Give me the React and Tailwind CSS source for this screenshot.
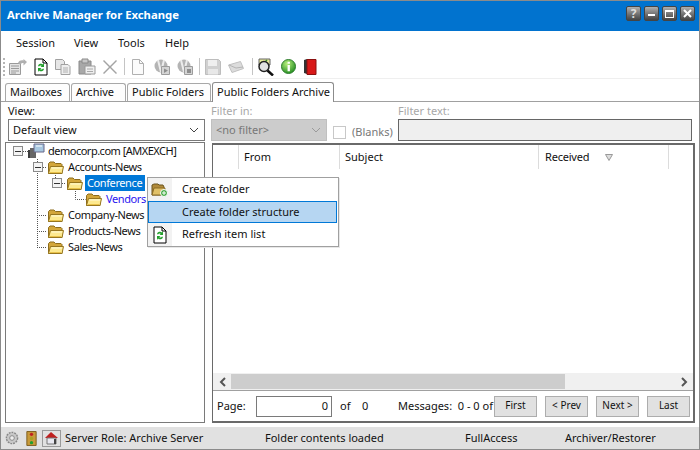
import React from "react";

const Folder = () => (
  <svg width="18" height="15" viewBox="0 0 18 15" className="shrink-0">
    <path d="M1.500 13.500V3.500L3 2h4l1.500 1.500H14l1 1V13.500z" fill="#d3a63a" stroke="#8d6c1c" />
    <path d="M1.500 13.500L3.500 6.500h13l-1.500 7z" fill="#fde98f" stroke="#97761f" />
    <path d="M4.500 8h10.500" stroke="#fffadb" />
    <path d="M3 12.500h11" stroke="#e9c24a" />
  </svg>
);

const Expander = () => (
  <span className="w-[10px] h-[10px] border border-[#8a8a8a] bg-[#f4f4f4] flex items-center justify-center shrink-0">
    <span className="w-[6px] h-px bg-[#333]" />
  </span>
);

const RefreshDoc = () => (
  <svg width="14" height="18" viewBox="0 0 14 18">
    <path d="M1 1h8l4 4v12H1z" fill="#fff" stroke="#000" />
    <path d="M9 1v4h4" fill="none" stroke="#000" />
    <path d="M4 8a3 3 0 0 1 5-1.500L10 5v4H6.500l1.300-1.200A2 2 0 0 0 5 8.500z" fill="#22a02c" />
    <path d="M10 11a3 3 0 0 1-5 1.500L4 14v-4h3.500l-1.300 1.200A2 2 0 0 0 9 10.500z" fill="#22a02c" />
  </svg>
);

const Toolbar = () => (
  <div className="h-[24px] shrink-0 flex items-center pl-[2px] border-b border-[#efefef]">
    <span className="w-[2px] h-[18px] border-l-2 border-dotted border-[#b5b5b5]" />
    <svg width="18" height="16" viewBox="0 0 18 16" className="ml-[4px]">
      <path d="M0.500 4.500h11v11h-11z" fill="#e4e4e4" stroke="#9a9a9a" />
      <path d="M2 7h8M2 9.500h8M2 12h8M2 14h5" stroke="#9a9a9a" />
      <path d="M9 4c1-2.500 3.500-3 5.500-2.500V0L18 3l-3.500 3.500V4c-1.500 0-3 .5-3.500 1.500z" fill="#b0b0b0" />
    </svg>
    <span className="ml-[7px] flex"><RefreshDoc /></span>
    <svg width="16" height="16" viewBox="0 0 16 16" className="ml-[7px]">
      <path d="M.5.5h7l2 2v8h-9z" fill="#e6e6e6" stroke="#a0a0a0" />
      <path d="M6 5.500h7l2 2v8H6z" fill="#eeeeee" stroke="#a0a0a0" />
      <path d="M8 9h5M8 11h5M8 13h5" stroke="#b0b0b0" />
    </svg>
    <svg width="18" height="17" viewBox="0 0 18 17" className="ml-[7px]">
      <path d="M1 3h12v13H1z" fill="#a8a8a8" stroke="#8a8a8a" />
      <path d="M4 1h6v4H4z" fill="#c8c8c8" stroke="#8a8a8a" />
      <path d="M7 8h10v8H7z" fill="#efefef" stroke="#9a9a9a" />
      <path d="M9 11h6M9 13.500h6" stroke="#aaa" />
    </svg>
    <svg width="14" height="14" viewBox="0 0 14 14" className="ml-[7px]">
      <path d="M1 0l6 6 6-6 1 1-6 6 6 6-1 1-6-6-6 6-1-1 6-6-6-6z" fill="#a4a4a4" />
    </svg>
    <span className="ml-[7px] w-px h-[17px] bg-[#c4c4c4]" />
    <svg width="12" height="16" viewBox="0 0 12 16" className="ml-[7px]">
      <path d="M.5.5h7l4 4v11h-11z" fill="#fbfbfb" stroke="#b0b0b0" />
      <path d="M7.500.5v4h4" fill="none" stroke="#b0b0b0" />
    </svg>
    <svg width="16" height="16" viewBox="0 0 16 16" className="ml-[10px]">
      <circle cx="7" cy="7" r="6.500" fill="#b4b4b4" />
      <path d="M4 1l3 12M10 1L7 13" stroke="#ececec" strokeWidth="2" />
      <path d="M7.500 7.500h8v8h-8z" fill="#d4d4d4" stroke="#9c9c9c" />
      <path d="M10 9.500l4 2-4 2.500z" fill="#8e8e8e" />
    </svg>
    <svg width="16" height="16" viewBox="0 0 16 16" className="ml-[7px]">
      <circle cx="7" cy="7" r="6.500" fill="#b4b4b4" />
      <path d="M4 1l3 12M10 1L7 13" stroke="#ececec" strokeWidth="2" />
      <path d="M7.500 7.500h8v8h-8z" fill="#d4d4d4" stroke="#9c9c9c" />
      <path d="M10 10h4v4h-4z" fill="#8e8e8e" />
    </svg>
    <span className="ml-[6px] w-px h-[17px] bg-[#c4c4c4]" />
    <svg width="16" height="16" viewBox="0 0 16 16" className="ml-[5px]">
      <path d="M.5.5h13l2 2v13H.500z" fill="#d0d0d0" stroke="#bdbdbd" />
      <path d="M3 1h9v6H3z" fill="#efefef" />
      <path d="M3 10h10v5.500H3z" fill="#e8e8e8" />
    </svg>
    <svg width="16" height="12" viewBox="0 0 16 12" className="ml-[7px]">
      <path d="M.5 4l12-3.500 3 7-11.500 4z" fill="#dcdcdc" stroke="#c0c0c0" />
      <path d="M1 4l7 3 7-1" fill="none" stroke="#b4b4b4" />
    </svg>
    <span className="ml-[8px] w-px h-[17px] bg-[#c4c4c4]" />
    <svg width="17" height="18" viewBox="0 0 17 18" className="ml-[4px]">
      <path d="M2 1h11v6H2z" fill="#e6e89a" stroke="#666" />
      <path d="M4 4l2 2 4-4" stroke="#3a8a2a" strokeWidth="1.500" fill="none" />
      <circle cx="7" cy="8.500" r="5" fill="#e2e2e2" stroke="#222" strokeWidth="1.500" />
      <path d="M10.500 12.500l5.500 5" stroke="#111" strokeWidth="2.500" />
    </svg>
    <svg width="15" height="15" viewBox="0 0 16 16" className="ml-[7px]">
      <defs>
        <radialGradient id="gi" cx="40%" cy="30%" r="75%">
          <stop offset="0" stopColor="#b8ef7c" />
          <stop offset="1" stopColor="#1e8a1e" />
        </radialGradient>
      </defs>
      <circle cx="8" cy="8" r="7.500" fill="url(#gi)" stroke="#2a7a2a" />
      <path d="M7 3h2.500v2H7zM7 6.500h2.500V13H7z" fill="#fff" />
    </svg>
    <svg width="13" height="16" viewBox="0 0 13 16" className="ml-[8px]">
      <path d="M0 1l3-1v15l-3-1z" fill="#333" />
      <path d="M3 .5h9v15H3z" fill="#d81818" stroke="#8a1010" />
    </svg>
  </div>
);

const Tab = ({ children, w, active }) => (
  <div
    className={`border border-b-0 rounded-t-[3px] flex items-center pl-[4px] pb-[2px] whitespace-nowrap ${
      active ? "h-[20px] bg-white -mb-px relative z-10 border-[#8c8c8c]" : "h-[18px] bg-[#fdfdfd] border-[#a8a8a8]"
    }`}
    style={{ width: w }}
  >
    {children}
  </div>
);

const TreeRow = ({ indent, expander, gap = 4, iconGap = 3, icon, children }) => (
  <div className="h-[16px] flex items-center relative" style={{ paddingLeft: indent }}>
    {expander ? <Expander /> : <span className="w-[10px]" />}
    <span className="flex" style={{ marginLeft: gap, marginRight: iconGap }}>{icon}</span>
    {children}
  </div>
);

const TreeText = ({ children }) => (
  <span className="pb-[2px] tracking-[-0.4px] whitespace-nowrap">{children}</span>
);

const PagerButton = ({ children }) => (
  <button className="w-[43px] h-[21px] bg-[#e1e1e1] border border-[#adadad] text-[10px] text-[#111] pb-[2px]">
    {children}
  </button>
);

const StatusText = ({ w, children }) => (
  <span className="shrink-0 whitespace-nowrap pb-[2px]" style={{ width: w }}>{children}</span>
);

export default function App() {
  return (
    <div
      className="w-[700px] h-[450px] relative overflow-hidden bg-white border border-[#8b8b8b] flex flex-col text-[11px] text-[#111] leading-none"
      style={{ fontFamily: '"Noto Sans", sans-serif' }}
    >
      {/* title bar */}
      <div className="h-[30px] shrink-0 bg-[#0173cf] flex items-center pl-[6px] pr-[4px] text-white font-bold text-[11.3px]">
        <span className="flex-1 pb-[2px]">Archive Manager for Exchange</span>
        <div className="flex gap-[3px] -mt-[5px]">
          <span className="w-[15px] h-[15px] rounded-[2px] border border-[#444] bg-gradient-to-b from-[#b0b0b0] to-[#444] text-[#ddd] text-[12px] font-bold flex items-center justify-center">?</span>
          <span className="w-[15px] h-[15px] rounded-[2px] border border-[#444] bg-gradient-to-b from-[#b0b0b0] to-[#444] flex items-center justify-center">
            <span className="w-[7px] h-[2px] bg-white mt-[2px]" />
          </span>
          <span className="w-[15px] h-[15px] rounded-[2px] border border-[#444] bg-gradient-to-b from-[#b0b0b0] to-[#444] flex items-center justify-center">
            <span className="w-[9px] h-[8px] border border-white border-t-2" />
          </span>
          <span className="w-[15px] h-[15px] rounded-[2px] border border-[#444] bg-gradient-to-b from-[#b0b0b0] to-[#444] flex items-center justify-center">
            <svg width="9" height="9" viewBox="0 0 9 9"><path d="M1 1l7 7M8 1L1 8" stroke="#fff" strokeWidth="2" /></svg>
          </span>
        </div>
      </div>

      {/* menu */}
      <div className="h-[24px] shrink-0 flex items-center pl-[15px] pb-[2px]">
        <span className="w-[58px]">Session</span>
        <span className="w-[44px]">View</span>
        <span className="w-[47px]">Tools</span>
        <span>Help</span>
      </div>

      <Toolbar />

      {/* tabs */}
      <div className="h-[22px] shrink-0 flex items-end pl-[4px] gap-[1px]">
        <Tab w={65}>Mailboxes</Tab>
        <Tab w={55}>Archive</Tab>
        <Tab w={84}>Public Folders</Tab>
        <Tab w={122} active>Public Folders Archive</Tab>
      </div>

      {/* body */}
      <div className="flex-1 flex px-[4px] min-h-0 border-t border-[#a0a0a0]">
        {/* left */}
        <div className="w-[200px] shrink-0 flex flex-col">
          <div className="pl-[3px] h-[17px] flex items-center pb-[1px]">View:</div>
          <div className="ml-[3px] h-[22px] border border-[#7a7a7a] flex items-center pl-[4px] pr-[5px]">
            <span className="flex-1 pb-[2px]">Default view</span>
            <svg width="10" height="6" viewBox="0 0 10 6"><path d="M1 1l4 4 4-4" fill="none" stroke="#444" /></svg>
          </div>
          <div className="relative mt-[1px] flex-1 border border-[#7a7a7a]">
            <svg className="absolute left-0 top-0" width="110" height="120" viewBox="0 0 110 120">
              <g stroke="#555" strokeDasharray="1 1" fill="none">
                <path d="M17 8.500h5M31.500 16V105M31 72.500h10M31 88.500h10M31 104.500h10M37 24.500h4" />
                <path d="M49.500 30v6M56 40.500h4" />
                <path d="M69.500 46v10.500h10" />
              </g>
            </svg>
            <TreeRow indent={7} expander icon={
              <svg width="18" height="16" viewBox="0 0 18 16">
                <path d="M1 7h7v8H1z" fill="#3e3e3e" />
                <path d="M3 5h6v10H3z" fill="#666" />
                <path d="M7 1h10v8H7z" fill="#a8c8e0" stroke="#668" />
                <path d="M9 3h6" stroke="#fff" />
              </svg>
            }>
              <span className="whitespace-nowrap pb-[2px] tracking-[-0.5px]">democorp.com [AMXEXCH]</span>
            </TreeRow>
            <TreeRow indent={27} expander icon={<Folder />}>
              <TreeText>Accounts-News</TreeText>
            </TreeRow>
            <TreeRow indent={46} expander icon={<Folder />}>
              <span className="bg-[#0078d7] text-white h-[16px] w-[60px] flex items-center pl-[2px] pb-[2px] -ml-[2px] tracking-[-0.4px]">Conference</span>
            </TreeRow>
            <TreeRow indent={65} icon={<Folder />}>
              <span className="text-[#2a14f0] pb-[2px] tracking-[-0.4px]">Vendors</span>
            </TreeRow>
            <TreeRow indent={27} icon={<Folder />}>
              <TreeText>Company-News</TreeText>
            </TreeRow>
            <TreeRow indent={27} icon={<Folder />}>
              <TreeText>Products-News</TreeText>
            </TreeRow>
            <TreeRow indent={27} icon={<Folder />}>
              <TreeText>Sales-News</TreeText>
            </TreeRow>
          </div>
        </div>

        {/* right */}
        <div className="ml-[6px] flex-1 flex flex-col min-w-0">
          <div className="h-[41px] shrink-0 flex">
            <div className="w-[116px] flex flex-col">
              <div className="h-[17px] flex items-center pb-[1px] text-[#a8a8a8]">Filter in:</div>
              <div className="h-[22px] bg-[#cccccc] border border-[#c0c0c0] flex items-center pl-[4px] pr-[5px] text-[#777]">
                <span className="flex-1 pb-[2px]">&lt;no filter&gt;</span>
                <svg width="10" height="6" viewBox="0 0 10 6"><path d="M1 1l4 4 4-4" fill="none" stroke="#9a9a9a" /></svg>
              </div>
            </div>
            <div className="ml-[6px] w-[65px] flex items-end pb-[4px] gap-[6px]">
              <span className="w-[13px] h-[13px] border border-[#c8c8c8] bg-white" />
              <span className="text-[#777] pb-[2px]">(Blanks)</span>
            </div>
            <div className="flex-1 mr-[3px] flex flex-col">
              <div className="h-[17px] flex items-center pb-[1px] text-[#a8a8a8]">Filter text:</div>
              <div className="h-[22px] bg-[#efefef] border border-[#666]" />
            </div>
          </div>
          <div className="flex-1 ml-px border-t-2 border-r-2 border-b-2 border-l border-[#6a6a6a] flex flex-col min-h-0">
            <div className="h-[24px] shrink-0 flex">
              <div className="w-[26px] border-r border-[#dcdcdc]" />
              <div className="w-[101px] border-r border-[#dcdcdc] pl-[5px] pb-[2px] flex items-center">From</div>
              <div className="w-[199px] border-r border-[#dcdcdc] pl-[5px] pb-[2px] flex items-center">Subject</div>
              <div className="w-[130px] border-r border-[#dcdcdc] pl-[6px] flex items-center">
                <span className="pb-[2px] tracking-[-0.2px]">Received</span>
                <svg width="8" height="7" viewBox="0 0 8 7" className="ml-[16px]"><path d="M0.500 0.500h7L4 6.500z" fill="#ddd" stroke="#999" /></svg>
              </div>
            </div>
            <div className="flex-1" />
            <div className="h-[17px] shrink-0 flex items-center bg-[#f0f0f0]">
              <span className="w-[18px] flex justify-center">
                <svg width="7" height="10" viewBox="0 0 7 10"><path d="M6 1L2 5l4 4" fill="none" stroke="#555" strokeWidth="2" /></svg>
              </span>
              <div className="w-[334px] h-[15px] bg-[#cdcdcd]" />
              <div className="flex-1" />
              <span className="w-[18px] flex justify-center">
                <svg width="7" height="10" viewBox="0 0 7 10"><path d="M1 1l4 4-4 4" fill="none" stroke="#555" strokeWidth="2" /></svg>
              </span>
            </div>
            <div className="h-[31px] shrink-0 border-t border-[#a0a0a0] flex items-center pl-[4px] whitespace-nowrap">
              <span className="w-[39px] pb-[2px]">Page:</span>
              <div className="w-[76px] h-[21px] border border-[#7a7a7a] flex items-center justify-end pr-[3px] pb-[2px]">0</div>
              <span className="ml-[8px] w-[22px] pb-[2px]">of</span>
              <span className="w-[36px] pb-[2px]">0</span>
              <span className="w-[96px] pb-[2px]">Messages:&nbsp; 0 - 0 of</span>
              <div className="flex gap-[8px]">
                <PagerButton>First</PagerButton>
                <PagerButton>&lt; Prev</PagerButton>
                <PagerButton>Next &gt;</PagerButton>
                <PagerButton>Last</PagerButton>
              </div>
            </div>
          </div>
        </div>
      </div>

      {/* status */}
      <div className="h-[22px] mt-[4px] shrink-0 bg-[#e1e1e1] flex items-center pl-[4px]">
        <svg width="14" height="14" viewBox="0 0 15 15">
          <circle cx="7.500" cy="7.500" r="6" fill="#c8c8c8" stroke="#888" strokeWidth="1.500" strokeDasharray="2 1" />
          <circle cx="7.500" cy="7.500" r="2.500" fill="#eee" stroke="#888" />
        </svg>
        <svg width="13" height="17" viewBox="0 0 14 17" className="ml-[6px]">
          <path d="M2 1h10v15H2z" fill="#c89a3a" stroke="#7a5a1a" />
          <circle cx="7" cy="4" r="1.800" fill="#c02020" />
          <circle cx="7" cy="8.500" r="1.800" fill="#a8a020" />
          <circle cx="7" cy="13" r="1.800" fill="#20a030" />
        </svg>
        <span className="ml-[4px] w-[19px] h-[17px] border border-[#9a9a9a] flex items-center justify-center">
          <svg width="15" height="14" viewBox="0 0 15 14">
            <path d="M1 7l6-6 7 6z" fill="#c02020" />
            <path d="M3 7h9v6H3z" fill="#e8e8f0" stroke="#777" />
            <path d="M10 8h2v5h-2z" fill="#444" />
          </svg>
        </span>
        <div className="flex items-center ml-[4px]">
          <StatusText w={200}>Server Role: Archive Server</StatusText>
          <StatusText w={200}>Folder contents loaded</StatusText>
          <StatusText w={100}>FullAccess</StatusText>
          <StatusText w={110}>Archiver/Restorer</StatusText>
        </div>
      </div>

      {/* context menu */}
      <div className="absolute left-[146px] top-[176px] w-[192px] h-[70px] bg-white border border-[#a0a0a0] shadow-[1px_1px_0_#e8e8e8]">
        <div className="absolute left-0 top-0 bottom-0 w-[24px] bg-[#f2f2f2]" />
        <div className="relative h-[23px] flex items-center">
          <svg width="18" height="15" viewBox="0 0 18 15" className="ml-[3px]">
            <path d="M1 13V3l2-1h4l1 1h4l1 2v8z" fill="#b08a3a" stroke="#6a5420" />
            <path d="M1 13l2-7h11l-1 7z" fill="#e0c068" stroke="#8a6a24" />
            <circle cx="13" cy="11" r="3.500" fill="#3ea83e" stroke="#fff" />
            <path d="M11 11h4M13 9v4" stroke="#fff" />
          </svg>
          <span className="ml-[13px] pb-[2px]">Create folder</span>
        </div>
        <div className="relative h-[22px] mr-px flex items-center bg-[#b6d6f2] border border-[#0078d7]">
          <span className="ml-[33px] pb-[2px]">Create folder structure</span>
        </div>
        <div className="relative h-[23px] flex items-center">
          <span className="ml-[5px] flex w-[16px]"><RefreshDoc /></span>
          <span className="ml-[13px] pb-[2px]">Refresh item list</span>
        </div>
      </div>
    </div>
  );
}
